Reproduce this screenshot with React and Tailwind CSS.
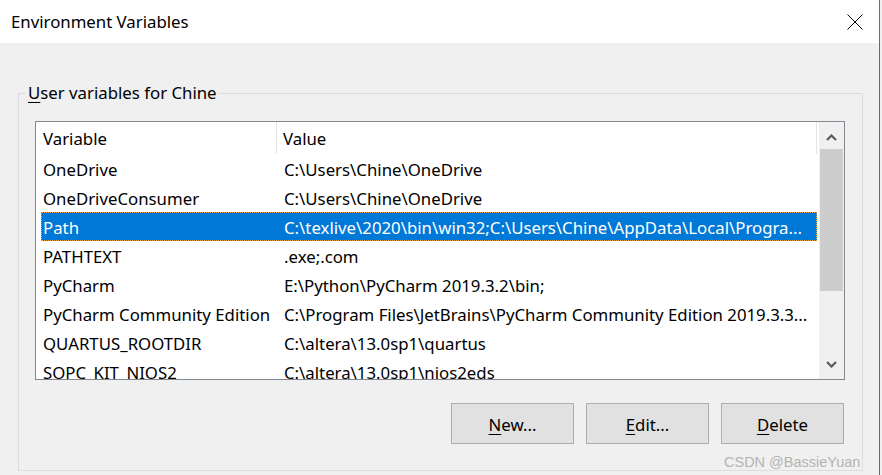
import React from "react";

const rows = [
  ["OneDrive", "C:\\Users\\Chine\\OneDrive"],
  ["OneDriveConsumer", "C:\\Users\\Chine\\OneDrive"],
  ["Path", "C:\\texlive\\2020\\bin\\win32;C:\\Users\\Chine\\AppData\\Local\\Progra..."],
  ["PATHTEXT", ".exe;.com"],
  ["PyCharm", "E:\\Python\\PyCharm 2019.3.2\\bin;"],
  ["PyCharm Community Edition", "C:\\Program Files\\JetBrains\\PyCharm Community Edition 2019.3.3..."],
  ["QUARTUS_ROOTDIR", "C:\\altera\\13.0sp1\\quartus"],
  ["SOPC_KIT_NIOS2", "C:\\altera\\13.0sp1\\nios2eds"],
];

const Chevron = ({ up }) => (
  <svg width="11" height="7" viewBox="0 0 11 7">
    <path
      d={up ? "M1 6 L5.5 1.5 L10 6" : "M1 1 L5.5 5.5 L10 1"}
      fill="none"
      stroke="#5a5a5a"
      strokeWidth="2.2"
    />
  </svg>
);

const Button = ({ hot, rest }) => (
  <button className="w-[123px] h-[41px] bg-[#e1e1e1] border border-[#adadad] text-black pt-[2px]">
    <span className="underline underline-offset-[3px]">{hot}</span>
    {rest}
  </button>
);

const App = () => {
  return (
    <div
      className="relative w-[882px] h-[475px] flex overflow-hidden text-[16.8px] text-black"
      style={{ fontFamily: '"Noto Sans", "Open Sans", sans-serif' }}
    >
      <div className="w-[879px] flex flex-col bg-[#f0f0f0]">
        {/* title bar */}
        <div className="h-[43px] bg-white flex items-center justify-between pl-[11px] pr-[16px] pt-[1px]">
          <span className="leading-none">Environment Variables</span>
          <svg width="16" height="16" viewBox="0 0 16 16">
            <path d="M0.5 0.5 L15.5 15.5 M15.5 0.5 L0.5 15.5" stroke="#000" strokeWidth="1" />
          </svg>
        </div>

        {/* group box */}
        <fieldset className="ml-[18px] mt-[39px] w-[845px] h-[389px] border border-[#dcdcdc] p-0">
          <legend className="ml-[7px] px-[2px] leading-[22px]">
            <span className="underline underline-offset-[3px]">U</span>ser variables for Chine
          </legend>

          <div className="ml-[16px] mt-[17px] w-[810px] h-[259px] border border-[#828790] bg-white flex">
            <div className="flex-1 overflow-hidden">
              {/* header */}
              <div className="h-[32px] flex items-center ml-[5px] w-[776px]">
                <div className="w-[236px] h-full pl-[2px] pt-[2px] flex items-center border-r border-[#e5e5e5]">
                  Variable
                </div>
                <div className="pl-[6px] pt-[2px] flex-1 h-full flex items-center border-r border-[#e5e5e5]">
                  Value
                </div>
              </div>
              {rows.map(([name, value]) => {
                const sel = name === "Path";
                return (
                  <div
                    key={name}
                    className={
                      sel
                        ? "h-[29px] ml-[5px] w-[776px] flex items-center pt-[2px] bg-[#0078d7] text-white border border-dotted border-[#f0a040]"
                        : "h-[29px] ml-[5px] w-[776px] flex items-center pt-[2px] border border-transparent"
                    }
                  >
                    <div className="w-[235px] pl-[1px] whitespace-nowrap overflow-hidden">{name}</div>
                    <div className="pl-[7px] flex-1 whitespace-nowrap overflow-hidden">{value}</div>
                  </div>
                );
              })}
            </div>

            {/* scrollbar */}
            <div className="w-[25px] bg-[#f0f0f0] flex flex-col items-center">
              <div className="h-[27px] w-full flex items-center justify-center pt-[3px]">
                <Chevron up />
              </div>
              <div className="h-[142px] w-[23px] bg-[#cdcdcd]" />
              <div className="flex-1" />
              <div className="h-[27px] w-full flex items-center justify-center pb-[3px]">
                <Chevron />
              </div>
            </div>
          </div>

          <div className="flex gap-[12px] justify-end mt-[23px] mr-[18px]">
            <Button hot="N" rest="ew..." />
            <Button hot="E" rest="dit..." />
            <Button hot="D" rest="elete" />
          </div>
        </fieldset>
      </div>
      <div className="w-px bg-[#6b6b6b]" />
      <div className="w-[2px] bg-[#f0f0f0]" />

      <span
        className="absolute left-[724px] top-[455px] text-[14.5px] leading-none text-[#b4b4b4]"
        style={{ fontFamily: '"Liberation Sans", Arial, sans-serif' }}
      >
        CSDN @BassieYuan
      </span>
    </div>
  );
};

export default App;
